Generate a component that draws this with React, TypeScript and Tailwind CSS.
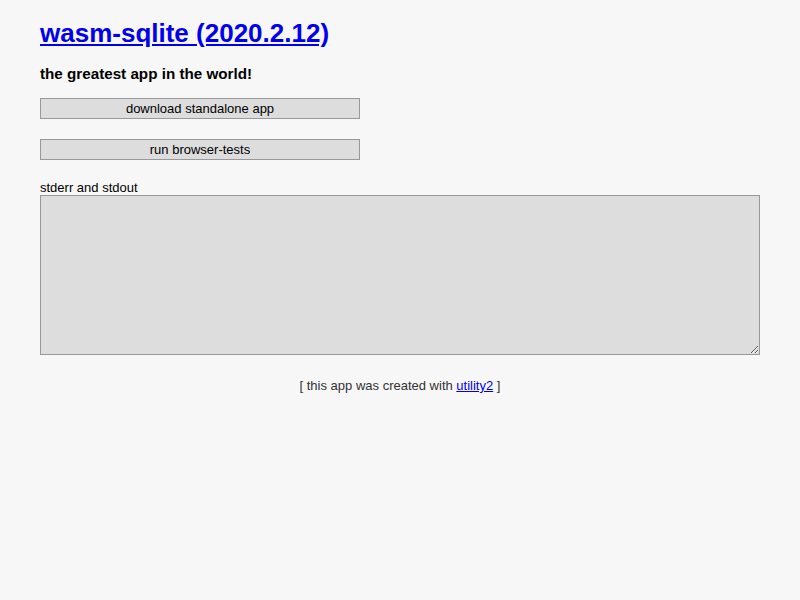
export default function App() {
  return (
    <div
      className="min-h-[600px] w-full bg-[#f7f7f7] px-[40px] pt-[18px] text-[13px] text-black"
      style={{ fontFamily: '"Liberation Sans", Arial, Helvetica, sans-serif' }}
    >
      <h1 className="text-[26px] font-bold leading-[30px]">
        <a href="#" className="text-[#0000ee] underline">
          wasm-sqlite (2020.2.12)
        </a>
      </h1>
      <h3 className="mt-[17px] text-[15.21px] font-bold leading-[17.5px]">
        the greatest app in the world!
      </h3>
      <button className="mt-[15.5px] block h-[21px] w-[320px] border border-[#999] bg-[#ddd] text-[13px] leading-[19px] text-black">
        download standalone app
      </button>
      <button className="mt-[20px] block h-[21px] w-[320px] border border-[#999] bg-[#ddd] text-[13px] leading-[19px] text-black">
        run browser-tests
      </button>
      <div className="mt-[20px] leading-[15px]">stderr and stdout</div>
      <textarea
        readOnly
        className="block h-[160px] w-[720px] resize-y border border-[#999] bg-[#ddd] p-0 outline-none"
      />
      <div className="mt-[23px] text-center leading-[15px] text-[#333]">
        [ this app was created with{" "}
        <a href="#" className="text-[#0000ee] underline">
          utility2
        </a>{" "}
        ]
      </div>
    </div>
  );
}
